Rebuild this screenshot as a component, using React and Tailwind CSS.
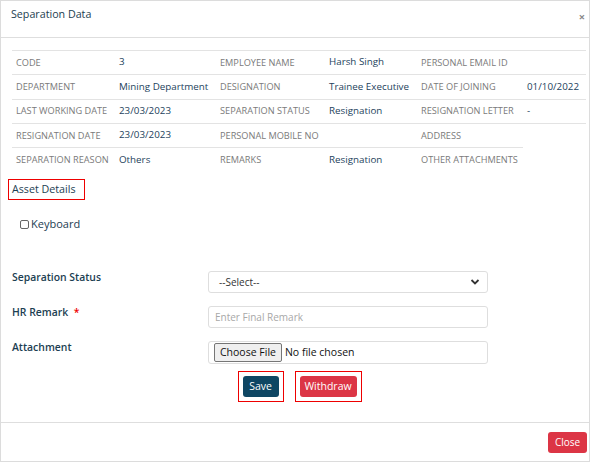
import React from "react";

const rows = [
  ["CODE", "3", "EMPLOYEE NAME", "Harsh Singh", "PERSONAL EMAIL ID", ""],
  ["DEPARTMENT", "Mining Department", "DESIGNATION", "Trainee Executive", "DATE OF JOINING", "01/10/2022"],
  ["LAST WORKING DATE", "23/03/2023", "SEPARATION STATUS", "Resignation", "RESIGNATION LETTER", "-"],
  ["RESIGNATION DATE", "23/03/2023", "PERSONAL MOBILE NO", "", "ADDRESS", ""],
  ["SEPARATION REASON", "Others", "REMARKS", "Resignation", "OTHER ATTACHMENTS"],
];

const widths = ["w-[103px]", "w-[101px]", "w-[109px]", "w-[92px]", "w-[106px]", "w-[63px]"];

const App = () => {
  return (
    <div
      className="w-[590px] h-[462px] border border-[#dcdcdc] bg-white flex flex-col text-[#1c3e52]"
      style={{ fontFamily: "'Open Sans', 'Liberation Sans', sans-serif" }}
    >
      {/* Header */}
      <div className="h-[37px] shrink-0 flex items-start justify-between pt-[5px] pl-[10px] pr-[4px] border-b border-[#dedede]">
        <span className="text-[10.7px] text-[#1c3e50]">Separation Data</span>
        <span className="mt-[5px] text-[11px] leading-none text-[#888] font-bold">×</span>
      </div>

      {/* Body */}
      <div className="flex-1 pl-[7px] pr-[2px] pt-[12px]">
        <table className="ml-[4px] border-collapse text-[9.8px]">
          <tbody>
            {rows.map((r, i) => (
              <tr key={i} className="h-[24.3px]">
                {r.map((c, j) => (
                  <td
                    key={j}
                    className={`${widths[j]} border-t border-[#e3e3e3] px-[4px] align-middle whitespace-nowrap ${
                      j % 2 === 0 ? "text-[#7a7a7a] text-[9.2px]" : "text-[#1d3f5c]"
                    }`}
                  >
                    {c}
                  </td>
                ))}
              </tr>
            ))}
          </tbody>
        </table>

        <div className="mt-[7px] w-[77px] flex items-center h-[21px] border border-[#ee0000] pl-[3px] text-[10.7px] text-[#1c3e52]">
          Asset Details
        </div>

        <label className="flex items-center mt-[16px] ml-[12px] gap-[2px] text-[11px] text-[#1c3e52]">
          <span className="w-[9px] h-[9px] border border-[#666] rounded-[2px] bg-white" />
          Keyboard
        </label>

        {/* Form */}
        <div className="mt-[39px] flex flex-col gap-[13px] pl-[4px]">
          <div className="flex items-start">
            <span className="w-[196px] -mt-[1px] text-[10.4px] font-semibold text-[#1c3e52]">Separation Status</span>
            <div className="w-[280px] h-[22px] border border-[#dedede] rounded-[3px] flex items-center justify-between pl-[10px] pr-[7px]">
              <span className="text-[10px] text-[#333]">--Select--</span>
              <svg width="10" height="8" viewBox="0 0 10 8">
                <path d="M1.5 2 L5 5.5 L8.5 2" fill="none" stroke="#333" strokeWidth="1.8" />
              </svg>
            </div>
          </div>
          <div className="flex items-start">
            <span className="w-[196px] -mt-[1px] text-[10.4px] font-semibold text-[#1c3e52]">
              HR Remark <span className="text-[#e00] ml-[3px]">*</span>
            </span>
            <div className="w-[280px] h-[22px] border border-[#dedede] rounded-[3px] flex items-center pl-[6px]">
              <span className="text-[10px] text-[#a8a8a8]">Enter Final Remark</span>
            </div>
          </div>
          <div className="flex items-start">
            <span className="w-[196px] -mt-[1px] text-[10.4px] font-semibold text-[#1c3e52]">Attachment</span>
            <div className="w-[280px] h-[23px] border border-[#dedede] rounded-[3px] flex items-center pl-[5px]">
              <span className="h-[19px] px-[5px] flex items-center border border-[#767676] rounded-[2px] bg-[#efefef] text-[10.5px] text-[#111]">
                Choose File
              </span>
              <span className="ml-[3px] text-[10.5px] text-[#111]">No file chosen</span>
            </div>
          </div>
        </div>

        <div className="mt-[7px] flex justify-center gap-[11px] pl-[4px]">
          <div className="border border-[#ee0000] p-[4px]">
            <div className="w-[36px] h-[21px] rounded-[3px] bg-[#0e4663] text-white text-[10.5px] flex items-center justify-center">
              Save
            </div>
          </div>
          <div className="border border-[#ee0000] p-[4px]">
            <div className="w-[57px] h-[21px] rounded-[3px] bg-[#dc3545] text-white text-[10.5px] flex items-center justify-center">
              Withdraw
            </div>
          </div>
        </div>
      </div>

      {/* Footer */}
      <div className="h-[39px] shrink-0 border-t border-[#dedede] flex items-center justify-end pr-[2px]">
        <div className="w-[39px] h-[21px] rounded-[3px] bg-[#dc3545] text-white text-[10px] flex items-center justify-center">
          Close
        </div>
      </div>
    </div>
  );
};

export default App;
